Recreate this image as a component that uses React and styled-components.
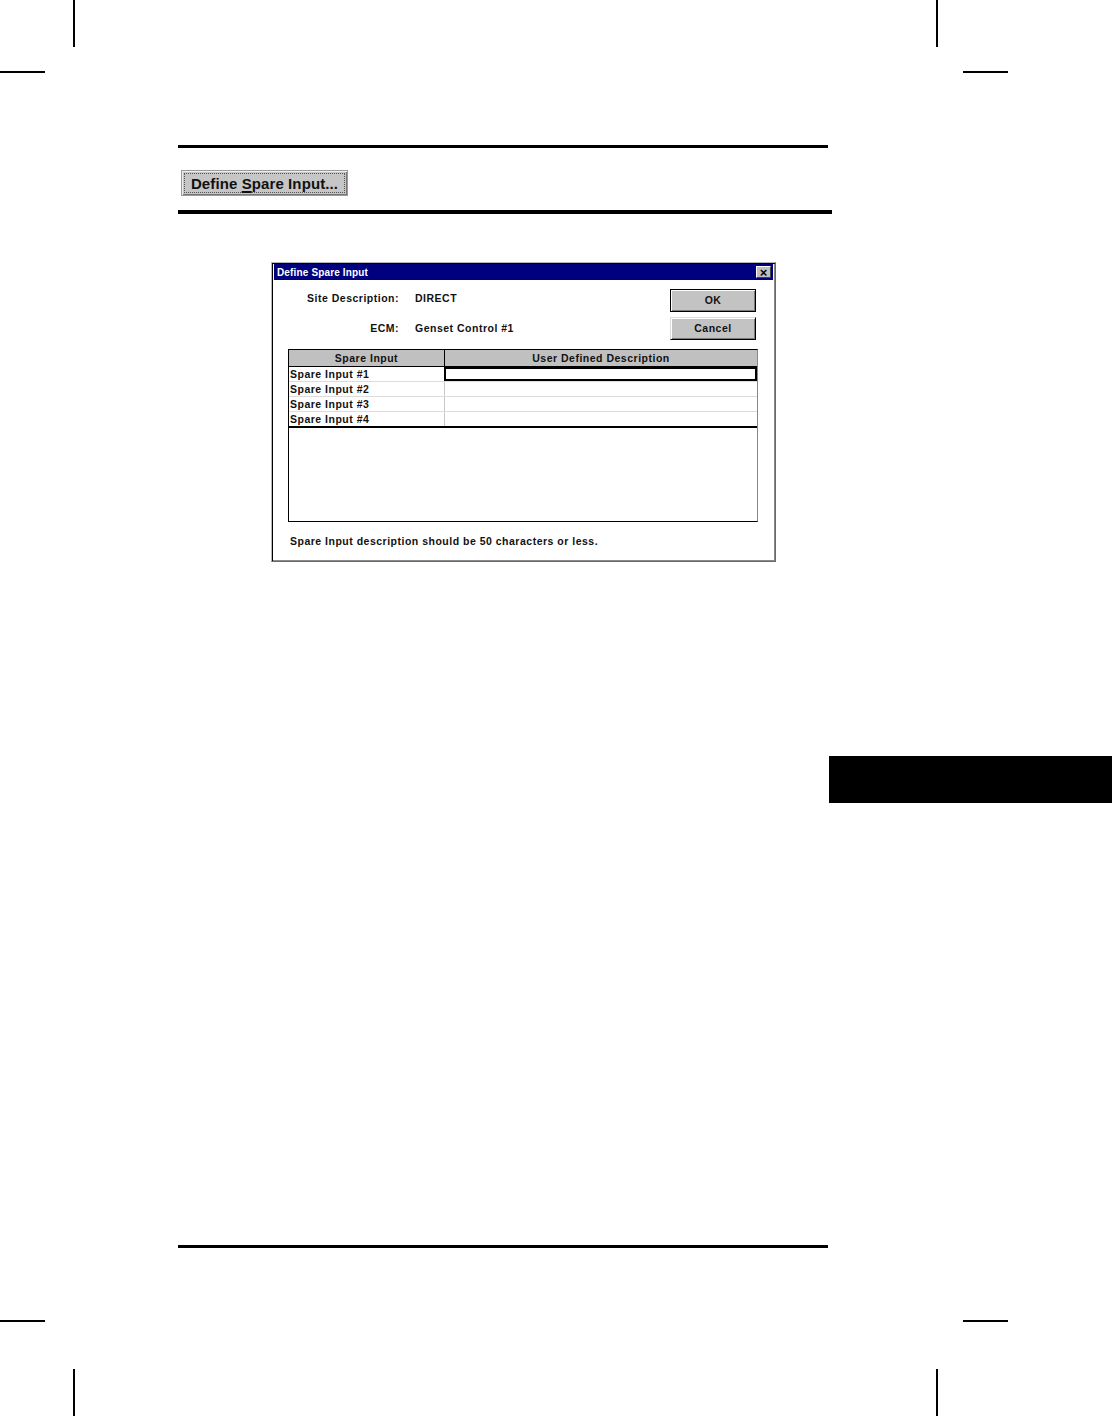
import React from "react";
import styled, { createGlobalStyle } from "styled-components";

const Global = createGlobalStyle`
  html, body { margin: 0; padding: 0; background: #fff; }
  body { font-family: "Liberation Sans", Arial, sans-serif; }
  * { box-sizing: border-box; }
`;

const Page = styled.div`
  position: relative;
  width: 1112px;
  height: 1416px;
  background: #fff;
  display: flex;
  flex-direction: column;
  padding-top: 145px;
  overflow: hidden;
`;

const CropMark = styled.div`
  position: absolute;
  background: #000;
  ${(p) => (p.$v ? "width: 2px; height: 47px;" : "width: 45px; height: 2px;")}
`;

const Column = styled.div`
  margin-left: 178px;
  width: 654px;
  display: flex;
  flex-direction: column;
  margin-top: ${(p) => p.$mt || 0}px;
`;

const Rule = styled.div`
  width: ${(p) => p.$w}px;
  height: ${(p) => p.$h}px;
  background: #000;
  margin-top: ${(p) => p.$mt || 0}px;
`;

const HeaderButton = styled.div`
  margin-top: 22px;
  margin-left: 3px;
  width: 167px;
  height: 26px;
  background: #c6c6c6;
  border: 1px solid #9a9a9a;
  box-shadow: inset 1px 1px #eee, inset -1px -1px #777;
  padding: 2px;
  display: flex;
`;

const HeaderButtonFace = styled.div`
  flex: 1;
  border: 1px dotted #555;
  display: flex;
  align-items: center;
  justify-content: center;
  font-size: 15px;
  font-weight: bold;
  letter-spacing: 0.1px;
  color: #111;
  u { text-decoration-thickness: 2px; text-underline-offset: 2px; }
`;

const Dialog = styled.div`
  margin-top: 48px;
  margin-left: 93px;
  width: 505px;
  height: 300px;
  background: #fff;
  border: 1px solid #b8b8b8;
  border-right-color: #6a6a6a;
  border-bottom-color: #6a6a6a;
  box-shadow: inset 1px 1px #000, inset -1px -1px #8a8a8a;
  padding: 1px 2px 2px 1px;
  display: flex;
  flex-direction: column;
  letter-spacing: 0.5px;
`;

const TitleBar = styled.div`
  height: 16px;
  margin-left: 1px;
  background: #00007f;
  color: #fff;
  display: flex;
  align-items: center;
  justify-content: space-between;
  padding: 0 2px 0 3px;
  font-size: 10px;
  font-weight: bold;
  letter-spacing: 0.15px;
`;

const CloseBtn = styled.div`
  width: 15px;
  height: 12px;
  background: #c0c0c0;
  border: 1px solid #fff;
  border-right-color: #404040;
  border-bottom-color: #404040;
  display: flex;
  align-items: center;
  justify-content: center;
  color: #000;
  font-size: 13px;
  font-weight: bold;
  line-height: 1;
  letter-spacing: 0;
`;

const Body = styled.div`
  flex: 1;
  padding: 10px 17px 0 15px;
  display: flex;
  flex-direction: column;
`;

const TopArea = styled.div`
  display: flex;
  justify-content: space-between;
`;

const Fields = styled.div`
  display: grid;
  grid-template-columns: 111px auto;
  column-gap: 16px;
  row-gap: 14px;
  align-content: start;
`;

const Label = styled.div`
  height: 16px;
  display: flex;
  align-items: center;
  justify-content: flex-end;
  font-size: 10.5px;
  font-weight: bold;
  color: #111;
`;

const Value = styled(Label)`
  justify-content: flex-start;
`;

const Buttons = styled.div`
  display: flex;
  flex-direction: column;
  gap: 5px;
  margin-top: -1px;
`;

const DlgButton = styled.div`
  width: 86px;
  height: 23px;
  background: #c3c3c3;
  border: 1px solid ${(p) => (p.$default ? "#000" : "#dcdcdc")};
  border-right-color: #000;
  border-bottom-color: #000;
  box-shadow: inset 1px 1px #fff, inset -1px -1px #7a7a7a;
  display: flex;
  align-items: center;
  justify-content: center;
  padding-bottom: 2px;
  font-size: 10.5px;
  font-weight: bold;
  color: #111;
`;

const Table = styled.div`
  margin-top: 9px;
  width: 470px;
  height: 173px;
  border: 1px solid #000;
  border-right-color: #888;
  display: flex;
  flex-direction: column;
`;

const Row = styled.div`
  display: grid;
  grid-template-columns: 155px 1fr;
  height: ${(p) => (p.$header ? 17 : 15)}px;
  background: ${(p) => (p.$header ? "#c0c0c0" : "#fff")};
  border-bottom: 1px solid ${(p) => (p.$dark ? "#000" : "#dcdcdc")};
  ${(p) => p.$last && "border-bottom-width: 2px; height: 16px;"}
`;

const Cell = styled.div`
  display: flex;
  align-items: center;
  justify-content: ${(p) => (p.$center ? "center" : "flex-start")};
  padding-left: ${(p) => (p.$center ? 0 : 1)}px;
  font-size: 10.5px;
  font-weight: bold;
  color: #111;
  border-left: ${(p) => (p.$divider ? `1px solid ${p.$darkDivider ? "#000" : "#c8c8c8"}` : "none")};
  ${(p) => p.$focus && "border: 2px solid #000;"}
`;

const Footer = styled.div`
  margin-top: 13px;
  padding-left: 2px;
  font-size: 10.5px;
  font-weight: bold;
  color: #111;
`;

const Tab = styled.div`
  margin-top: 194px;
  align-self: flex-end;
  width: 283px;
  height: 47px;
  background: #000;
`;

const rows = ["Spare Input #1", "Spare Input #2", "Spare Input #3", "Spare Input #4"];

export default function App() {
  return (
    <>
      <Global />
      <Page>
        <CropMark $v style={{ left: 73, top: 0 }} />
        <CropMark style={{ left: 0, top: 71 }} />
        <CropMark $v style={{ left: 936, top: 0 }} />
        <CropMark style={{ left: 963, top: 71 }} />
        <CropMark style={{ left: 0, top: 1320 }} />
        <CropMark $v style={{ left: 73, top: 1369 }} />
        <CropMark style={{ left: 963, top: 1320 }} />
        <CropMark $v style={{ left: 936, top: 1369 }} />

        <Column>
          <Rule $w={650} $h={3} />
          <HeaderButton>
            <HeaderButtonFace>
              Define&nbsp;<u>S</u>pare Input...
            </HeaderButtonFace>
          </HeaderButton>
          <Rule $w={654} $h={4} $mt={14} />
          <Dialog>
            <TitleBar>
              <span>Define Spare Input</span>
              <CloseBtn>×</CloseBtn>
            </TitleBar>
            <Body>
              <TopArea>
                <Fields>
                  <Label>Site Description:</Label>
                  <Value>DIRECT</Value>
                  <Label>ECM:</Label>
                  <Value>Genset Control #1</Value>
                </Fields>
                <Buttons>
                  <DlgButton $default>OK</DlgButton>
                  <DlgButton>Cancel</DlgButton>
                </Buttons>
              </TopArea>
              <Table>
                <Row $header $dark>
                  <Cell $center>Spare Input</Cell>
                  <Cell $center $divider $darkDivider>User Defined Description</Cell>
                </Row>
                {rows.map((r, i) => (
                  <Row key={r} $dark={i === rows.length - 1} $last={i === rows.length - 1}>
                    <Cell>{r}</Cell>
                    <Cell $divider $focus={i === 0} />
                  </Row>
                ))}
              </Table>
              <Footer>Spare Input description should be 50 characters or less.</Footer>
            </Body>
          </Dialog>
        </Column>
        <Tab />
        <Column $mt={442}>
          <Rule $w={650} $h={3} />
        </Column>
      </Page>
    </>
  );
}
